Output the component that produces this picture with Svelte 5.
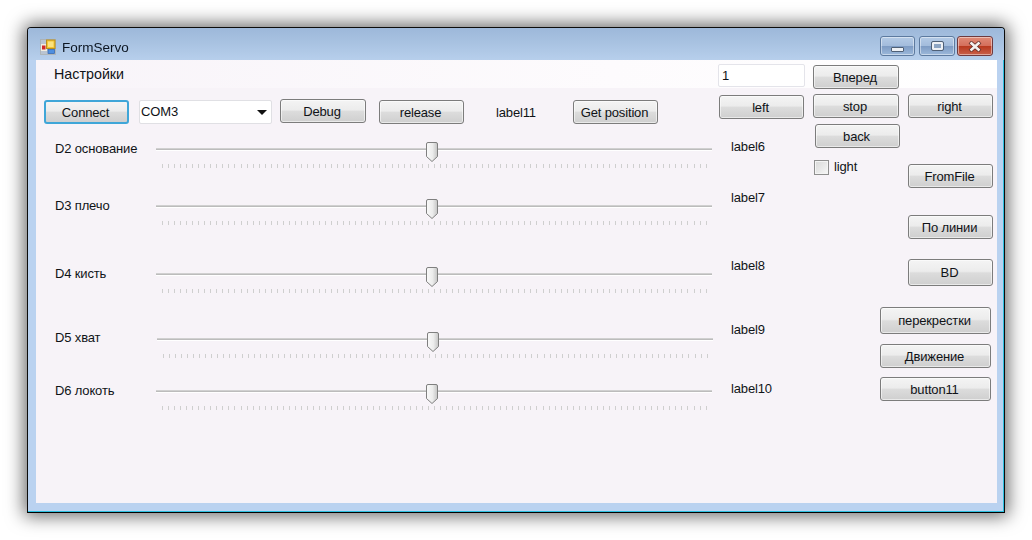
<script>
  const rows = [
    { name: 'D2 основание', value: 'label6', gap: 5, labelY: 0, valueY: -2, dx: 0 },
    { name: 'D3 плечо', value: 'label7', gap: 17, labelY: 0, valueY: -8, dx: 0 },
    { name: 'D4 кисть', value: 'label8', gap: 28, labelY: 0, valueY: -8, dx: 0 },
    { name: 'D5 хват', value: 'label9', gap: 25, labelY: -1, valueY: -9, dx: 1 },
    { name: 'D6 локоть', value: 'label10', gap: 12, labelY: 0, valueY: -2, dx: 0 }
  ];
</script>

<div class="stage">
  <div class="window">
    <header class="titlebar">
      <svg class="appicon" width="16" height="16" viewBox="0 0 16 16">
        <rect x="0.5" y="0.5" width="15" height="15" fill="#b9c4d2" stroke="#a9a496" stroke-dasharray="1 1" />
        <rect x="1" y="5" width="6" height="7" fill="#f1ece0" />
        <rect x="2" y="6.500" width="3.500" height="4" fill="#d12a2a" />
        <rect x="6.500" y="1" width="8.500" height="8.500" fill="#f4c531" stroke="#b98f1d" />
        <rect x="8" y="2.500" width="5.500" height="5.500" fill="#fbe27e" />
        <rect x="8" y="10.500" width="6.500" height="4" fill="#4f8fe0" stroke="#2f62ad" stroke-width="0.7" />
      </svg>
      <span class="title">FormServo</span>
      <div class="wincontrols">
        <div class="wc"><span class="min"></span></div>
        <div class="wc"><span class="max"></span></div>
        <div class="wc close">
          <svg width="16" height="11" viewBox="0 0 16 11">
            <path d="M3 1 L13 10 M13 1 L3 10" stroke="#5a2a25" stroke-width="4" />
            <path d="M3.500 1.500 L12.500 9.500 M12.500 1.500 L3.500 9.500" stroke="#f4f1f0" stroke-width="2.600" />
          </svg>
        </div>
      </div>
    </header>

    <main class="client">
      <section class="left">
        <div class="menu">
          <span class="menuitem">Настройки</span>
          <input class="textbox" value="1" />
        </div>
        <div class="controls">
          <button class="btn connect">Connect</button>
          <div class="combo">COM3<span class="arrow"></span></div>
          <button class="btn debug">Debug</button>
          <button class="btn release">release</button>
          <span class="label11">label11</span>
          <button class="btn getpos">Get position</button>
          <button class="btn leftbtn">left</button>
        </div>
        {#each rows as r}
          <div class="row" style="margin-top:{r.gap}px">
            <span class="name" style="margin-top:{12 + r.labelY}px">{r.name}</span>
            <div class="slider" style="margin-left:{r.dx}px;margin-right:{-r.dx}px">
              <div class="track"></div>
              <div class="ticks"></div>
              <svg class="thumb" width="12" height="20" viewBox="0 0 12 20">
                <defs>
                  <linearGradient id="th{r.value}" x1="0" x2="1" y1="0" y2="0">
                    <stop offset="0" stop-color="#fafafa" />
                    <stop offset="0.55" stop-color="#ececec" />
                    <stop offset="1" stop-color="#c4c4c4" />
                  </linearGradient>
                </defs>
                <path d="M0.500 2 Q0.500 .5 2 .5 H10 Q11.500 .5 11.500 2 V14.500 L6 19.500 L0.500 14.500 Z" fill="url(#th{r.value})" stroke="#7f7f7f" />
              </svg>
            </div>
            <span class="value" style="margin-top:{12 + r.valueY}px">{r.value}</span>
          </div>
        {/each}
      </section>

      <section class="colb">
        <button class="btn vpered">Вперед</button>
        <button class="btn stop">stop</button>
        <button class="btn back">back</button>
        <label class="light"><span class="check"></span>light</label>
      </section>

      <section class="colc">
        <button class="btn right">right</button>
        <button class="btn fromfile">FromFile</button>
        <button class="btn line">По линии</button>
        <button class="btn bd">BD</button>
        <button class="btn wide cross">перекрестки</button>
        <button class="btn wide move">Движение</button>
        <button class="btn wide b11">button11</button>
      </section>
    </main>
  </div>
</div>

<style>
  :global(body) {
    margin: 0;
    background: #fff;
    overflow: hidden;
  }
  .stage {
    width: 1032px;
    height: 540px;
    padding: 27px 0 0 27px;
    box-sizing: border-box;
    font-family: "Liberation Sans", Arial, sans-serif;
    font-size: 13px;
    letter-spacing: -0.15px;
    color: #101317;
  }
  .window {
    width: 978px;
    height: 486px;
    box-sizing: border-box;
    border: 1px solid #0c0c0c;
    border-radius: 4px 4px 0 0;
    border-bottom-color: #000;
    padding: 0 7px 8px 8px;
    background: #bad2f0;
    box-shadow: 0 0 18px 3px rgba(0, 0, 0, 0.6), inset -1px -1px 0 #2cc0e0;
    filter: blur(0.5px);
    display: flex;
    flex-direction: column;
  }
  .titlebar {
    height: 32px;
    margin: 0 -7px 0 -8px;
    padding: 0 10px 0 12px;
    background: linear-gradient(#9db8da, #a8c2e1 45%, #b7cfec);
    border-radius: 3px 3px 0 0;
    display: flex;
    align-items: center;
    flex: none;
  }
  .appicon {
    margin-top: 6px;
    flex: none;
  }
  .title {
    margin-left: 6px;
    margin-top: 7px;
    font-size: 13.500px;
    letter-spacing: 0;
    color: #0c1622;
  }
  .wincontrols {
    margin-left: auto;
    margin-top: -1px;
    display: flex;
    gap: 2px;
    align-self: flex-start;
    padding-top: 9px;
    padding-right: 1px;
  }
  .wc {
    width: 36px;
    height: 20px;
    box-sizing: border-box;
    border: 1px solid #5d7a9f;
    border-radius: 3px;
    background: linear-gradient(#b4cbe6, #a3bcdc 48%, #7e9cc4 52%, #9cb8da);
    box-shadow: inset 0 0 0 1px rgba(255, 255, 255, 0.45);
    display: flex;
    align-items: center;
    justify-content: center;
  }
  .wc:first-child {
    width: 35px;
    margin-right: 2px;
  }
  .close {
    border-color: #6f3a3f;
    background: linear-gradient(#e08b78, #d46f5c 48%, #b8391f 52%, #c8604a);
  }
  .min {
    width: 11px;
    height: 3px;
    margin-top: 6px;
    background: #eef1f5;
    border: 1px solid #4f6076;
    border-radius: 1px;
  }
  .max {
    width: 7px;
    height: 4px;
    background: #8ea6c4;
    border: 2px solid #eef1f5;
    outline: 1px solid #4f6076;
    border-radius: 1px;
  }
  .client {
    height: 443px;
    flex: none;
    background-color: #f7f3f8;
    background-image: linear-gradient(90deg, #f8f4f9, #fdfbfd 60%, #fff);
    background-size: 100% 28px;
    background-repeat: no-repeat;
    display: grid;
    grid-template-columns: 772px 92px 96px;
  }
  .left {
    width: 772px;
    min-width: 0;
  }
  .menu {
    height: 28px;
    display: flex;
    justify-content: space-between;
    align-items: flex-start;
  }
  .menuitem {
    margin: 6px 0 0 18px;
    font-size: 14.300px;
    letter-spacing: 0;
    line-height: 17px;
  }
  .textbox {
    width: 87px;
    height: 23px;
    margin: 4px 3px 0 0;
    box-sizing: border-box;
    border: 1px solid #e4e4ea;
    border-radius: 2px;
    background: #fff;
    padding: 0 3px;
    font: inherit;
    color: inherit;
    outline: none;
  }
  .controls {
    height: 29px;
    margin-top: 7px;
    display: flex;
    align-items: flex-start;
  }
  .btn {
    height: 24px;
    width: 85px;
    padding: 0 2px 0 0;
    box-sizing: border-box;
    border: 1px solid #7c7c7c;
    border-radius: 3px;
    background: linear-gradient(#f4f4f4, #ececec 45%, #dcdcdc 52%, #cfcfcf);
    box-shadow: inset 0 0 0 1px rgba(255, 255, 255, 0.55);
    font: inherit;
    letter-spacing: inherit;
    color: inherit;
    flex: none;
  }
  .connect {
    margin: 5px 0 0 8px;
    border: 2px solid #3fa6d8;
    box-shadow: none;
  }
  .combo {
    width: 133px;
    height: 24px;
    margin: 5px 0 0 10px;
    box-sizing: border-box;
    background: #fff;
    border: 1px solid #e0e0e4;
    border-radius: 2px;
    padding: 2px 1px;
    display: flex;
    justify-content: space-between;
    line-height: 18px;
  }
  .arrow {
    width: 0;
    height: 0;
    margin: 7px 3px 0 0;
    border: 5px solid transparent;
    border-top: 5px solid #111;
    border-bottom: 0;
  }
  .debug {
    width: 86px;
    margin: 4px 0 0 8px;
  }
  .release {
    margin: 5px 0 0 13px;
  }
  .label11 {
    width: 77px;
    margin: 10px 0 0 32px;
    box-sizing: border-box;
    flex: none;
    line-height: 16px;
  }
  .getpos {
    margin-top: 5px;
  }
  .leftbtn {
    margin-left: 61px;
  }
  .row {
    height: 40px;
    display: flex;
    align-items: flex-start;
    position: relative;
  }
  .name {
    width: 101px;
    margin-left: 19px;
    line-height: 16px;
    flex: none;
    white-space: nowrap;
  }
  .slider {
    width: 556px;
    flex: none;
    position: relative;
  }
  .track {
    height: 1px;
    margin-top: 19px;
    background: #bcbcbc;
    border-bottom: 1px solid #fff;
    border-top: 1px solid #d0d0d0;
  }
  .ticks {
    height: 4px;
    margin: 13px 5px 0 6px;
    background: repeating-linear-gradient(90deg, #cfcfcf 0 1px, transparent 1px 6.040px);
  }
  .thumb {
    position: absolute;
    left: 269.500px;
    top: 13px;
  }
  .value {
    margin-left: 19px;
    line-height: 16px;
    white-space: nowrap;
  }
  .colb,
  .colc {
    display: flex;
    flex-direction: column;
    align-items: flex-start;
  }
  .colb {
    margin-left: 5px;
  }
  .vpered {
    width: 86px;
    margin-top: 5px;
  }
  .stop {
    width: 86px;
    margin-top: 5px;
  }
  .back {
    margin: 6px 0 0 2px;
  }
  .light {
    margin: 12px 0 0 1px;
    display: flex;
    align-items: flex-start;
    gap: 5px;
    height: 14px;
    line-height: 13px;
  }
  .check {
    width: 15px;
    height: 15px;
    flex: none;
    box-sizing: border-box;
    border: 1px solid #8f8f8f;
    background: linear-gradient(135deg, #d8d8d8, #f7f7f7);
    box-shadow: inset 0 0 0 1px #f4f4f4;
  }
  .colc {
    margin-left: 8px;
  }
  .right {
    margin-top: 34px;
  }
  .fromfile {
    margin-top: 46px;
  }
  .line {
    margin-top: 27px;
  }
  .bd {
    margin-top: 20px;
    height: 27px;
  }
  .wide {
    width: 111px;
    margin-left: -28px;
  }
  .cross {
    margin-top: 21px;
    height: 27px;
  }
  .move {
    margin-top: 10px;
  }
  .b11 {
    margin-top: 9px;
  }
</style>
